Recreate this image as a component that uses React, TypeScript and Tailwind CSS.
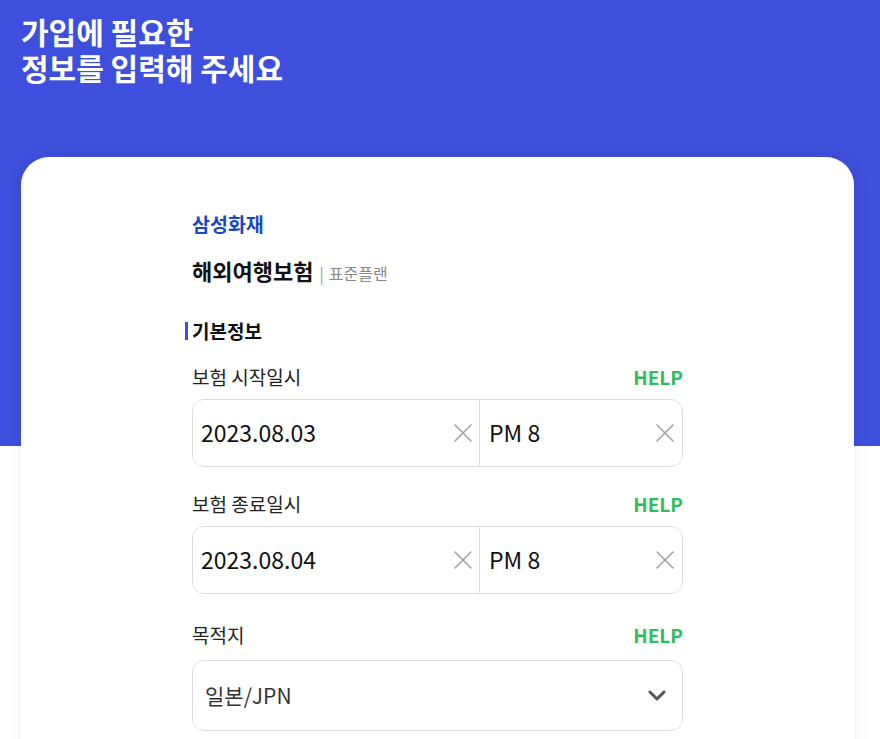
import React from "react";

const XIcon = () => (
  <svg width="20" height="20" viewBox="0 0 20 20" fill="none" stroke="#a3a3a3" strokeWidth="1.6" strokeLinecap="round">
    <path d="M2 2 L18 18 M18 2 L2 18" />
  </svg>
);

const Chevron = () => (
  <svg width="18" height="12" viewBox="0 0 18 12" fill="none" stroke="#555" strokeWidth="3" strokeLinecap="round" strokeLinejoin="round">
    <path d="M2 2 L9 9 L16 2" />
  </svg>
);

function Label({ text, className = "" }: { text: string; className?: string }) {
  return (
    <div className={`flex items-center justify-between h-[26px] ${className}`}>
      <span className="text-[19px] leading-[26px] text-[#222]">{text}</span>
      <span className="text-[19px] leading-[26px] font-bold text-[#2fbd5b]">HELP</span>
    </div>
  );
}

function DateTimeBox({ date, time }: { date: string; time: string }) {
  return (
    <div className="mt-[9px] flex h-[68px] rounded-[12px] border border-[#dedede]">
      <div className="flex flex-1 items-center justify-between pl-[8px] pr-[6px] border-r border-[#dedede]">
        <span className="text-[23px] leading-[30px] pb-[3px] text-[#111]">{date}</span>
        <XIcon />
      </div>
      <div className="flex w-[202px] items-center justify-between pl-[9px] pr-[7px]">
        <span className="text-[23px] leading-[30px] pb-[3px] text-[#111]">{time}</span>
        <XIcon />
      </div>
    </div>
  );
}

export default function App() {
  return (
    <div
      className="min-h-[739px] bg-white overflow-hidden"
      style={{ fontFamily: '"Noto Sans CJK KR", "Noto Sans", sans-serif' }}
    >
      <div className="h-[446px] bg-[#3d4fdc] px-[21px] pt-[13px]">
        <h1 className="text-[30px] leading-[36px] font-bold text-white">
          가입에 필요한
          <br />
          정보를 입력해 주세요
        </h1>
      </div>
      <div className="mx-[21px] mt-[-289px] w-[833px] rounded-t-[28px] bg-white pt-[54px] pb-[40px] shadow-[0_0_18px_rgba(0,0,0,0.07)]">
        <div className="mx-auto w-[491px]">
          <div className="text-[19.5px] leading-[26px] font-bold text-[#1947c9]">삼성화재</div>
          <div className="mt-[19px] flex items-baseline">
            <span className="text-[22px] leading-[28px] font-bold text-[#111]">해외여행보험</span>
            <span className="ml-[6px] text-[16px] text-[#999]">|</span>
            <span className="ml-[5px] text-[16px] text-[#888]">표준플랜</span>
          </div>
          <div className="mt-[34px] ml-[-7px] flex items-center">
            <span className="h-[18px] w-[3px] bg-[#3d4fdc]" />
            <span className="ml-[4px] text-[19px] leading-[24px] font-bold text-[#111]">기본정보</span>
          </div>
          <Label text="보험 시작일시" className="mt-[21px]" />
          <DateTimeBox date="2023.08.03" time="PM 8" />
          <Label text="보험 종료일시" className="mt-[24px]" />
          <DateTimeBox date="2023.08.04" time="PM 8" />
          <Label text="목적지" className="mt-[28px]" />
          <div className="mt-[12px] flex h-[71px] items-center justify-between rounded-[12px] border border-[#dedede] pl-[12px] pr-[16px]">
            <span className="text-[21px] text-[#333]">일본/JPN</span>
            <Chevron />
          </div>
        </div>
      </div>
    </div>
  );
}
